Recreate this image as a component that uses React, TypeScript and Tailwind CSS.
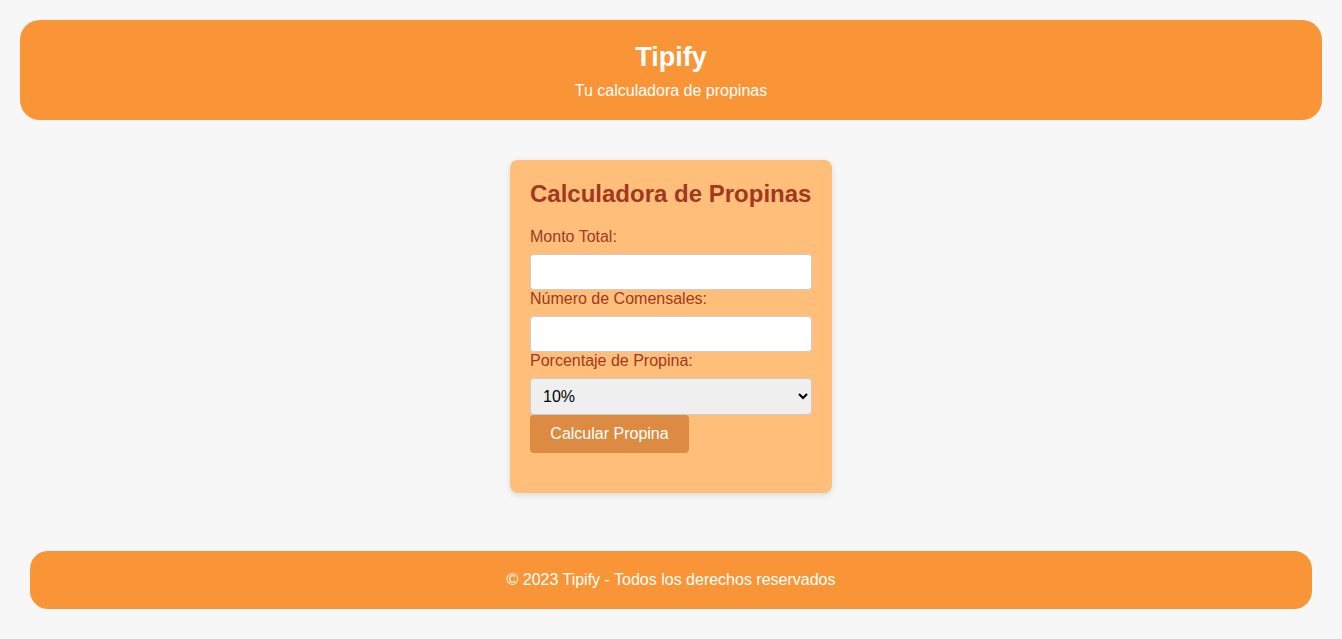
export default function App() {
  return (
    <div className="min-h-[639px] bg-[#f7f7f7] pt-5 pb-[30px] font-['Liberation_Sans',Arial,sans-serif]">
      <header className="mx-5 h-[100px] rounded-[20px] bg-[#f99536] pt-[21px] text-center text-white">
        <h1 className="text-[27px] leading-8 font-bold">Tipify</h1>
        <p className="mt-[9px] text-[16px] leading-[18px]">Tu calculadora de propinas</p>
      </header>

      <main className="flex justify-center pt-10">
        <div className="w-[322px] rounded-lg bg-[#ffbf7a] p-5 pb-10 shadow-[0_2px_6px_rgba(0,0,0,0.12)]">
          <h2 className="text-[24px] leading-7 font-bold text-[#a1391f]">Calculadora de Propinas</h2>
          <form className="mt-5 flex flex-col">
            <label className="mb-2 text-[16px] leading-[18px] text-[#a1391f]">Monto Total:</label>
            <input type="text" className="h-9 rounded border border-[#cccccc] bg-white px-2" />
            <label className="mb-2 text-[16px] leading-[18px] text-[#a1391f]">Número de Comensales:</label>
            <input type="text" className="h-9 rounded border border-[#cccccc] bg-white px-2" />
            <label className="mb-2 text-[16px] leading-[18px] text-[#a1391f]">Porcentaje de Propina:</label>
            <select className="h-[37px] rounded border border-[#cccccc] bg-[#efefef] px-2 text-[16px] text-black">
              <option>10%</option>
              <option>15%</option>
              <option>20%</option>
            </select>
            <button
              type="button"
              className="h-[38px] w-[159px] rounded bg-[#dd8b42] text-[16px] text-white"
            >
              Calcular Propina
            </button>
          </form>
        </div>
      </main>

      <footer className="mx-[30px] mt-[58px] h-[58px] rounded-[18px] bg-[#f99536] pt-5 text-center text-[16px] leading-[18px] text-white">
        © 2023 Tipify - Todos los derechos reservados
      </footer>
    </div>
  )
}
